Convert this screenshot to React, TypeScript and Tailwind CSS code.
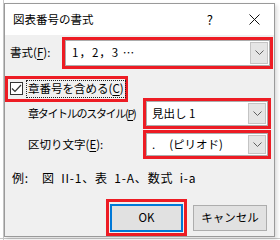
import React from "react";

const FONT = { fontFamily: '"Meiryo UI", "Noto Sans CJK JP", "Noto Sans", sans-serif' };

const Chevron = () => (
  <svg width="9" height="5" viewBox="0 0 9 5" fill="none">
    <path d="M0.5 0.5 L4.5 4.5 L8.5 0.5" stroke="#606060" strokeWidth="1" />
  </svg>
);

const Combo = ({ children }: { children: React.ReactNode }) => (
  <div className="border-[3px] border-[#ed1c24] h-full">
    <div className="flex h-full border border-[#acacac] bg-white p-[1px]">
      <div className="flex-1 flex items-center pl-[4px] text-[11.5px] leading-none whitespace-nowrap text-black">{children}</div>
      <div className="w-[18px] bg-[#e5e5e5] border border-[#c4c4c4] flex items-center justify-center">
        <Chevron />
      </div>
    </div>
  </div>
);

const U = ({ c }: { c: string }) => <span className="underline underline-offset-2">{c}</span>;

export default function App() {
  return (
    <div className="relative w-[280px] h-[240px] overflow-hidden bg-white" style={FONT}>
      {/* background sheet behind the dialog */}
      <div className="absolute left-[3px] top-0 w-px h-[240px] bg-[#c8c8c8]" />
      <div className="absolute left-0 top-[238px] w-[280px] h-px bg-[#c8c8c8]" />

      {/* dialog window */}
      <div className="absolute left-[4px] top-[3px] w-[271px] h-[234px] border border-[#9a9a9a] bg-[#f0f0f0] flex flex-col shadow-[2px_2px_4px_rgba(0,0,0,0.15)]">
        <div className="h-[31px] bg-white flex items-center pl-[8px] pr-[14px] text-[11.5px] leading-none whitespace-nowrap text-black shrink-0">
          <span className="flex-1">図表番号の書式</span>
          <span className="mr-[36px] text-[13px]">?</span>
          <svg width="11" height="11" viewBox="0 0 11 11">
            <path d="M0.5 0.5 L10.5 10.5 M10.5 0.5 L0.5 10.5" stroke="#111" strokeWidth="1" />
          </svg>
        </div>

        <div className="flex items-center mt-[2px] h-[32px] pr-[1px]">
          <div className="w-[57px] pl-[5px] text-[11.5px] leading-none whitespace-nowrap text-black">
            書式(<U c="F" />):
          </div>
          <div className="flex-1 h-full">
            <Combo>
              <span className="pl-[1px] tracking-[1px]">1，2，3 …</span>
            </Combo>
          </div>
        </div>

        <div className="mt-[7px] ml-0 w-[123px] h-[27px] border-[3px] border-[#ed1c24] flex items-center pl-[2px]">
          <div className="w-[13px] h-[13px] shrink-0 border border-[#333] bg-white flex items-center justify-center">
            <svg width="11" height="9" viewBox="0 0 11 9" fill="none">
              <path d="M1 4.5 L4 7.5 L10 1" stroke="#333" strokeWidth="1.2" />
            </svg>
          </div>
          <div className="ml-[3px] border border-dotted border-[#222] px-[1px] h-[18px] flex items-center text-[11.5px] leading-none whitespace-nowrap text-black">
            章番号を含める(<U c="C" />)
          </div>
        </div>

        <div className="flex items-center mt-[-4px] h-[31px] pr-[3px]">
          <div className="w-[138px] pl-[23px] text-[11px] tracking-[-1.3px] leading-none whitespace-nowrap text-black">
            章タイトルのスタイル(<U c="P" />)
          </div>
          <div className="flex-1 h-full">
            <Combo>見出し 1</Combo>
          </div>
        </div>

        <div className="flex items-center mt-[1px] h-[30px] pr-[3px]">
          <div className="w-[138px] pl-[23px] text-[11.5px] leading-none whitespace-nowrap text-black">
            区切り文字(<U c="E" />):
          </div>
          <div className="flex-1 h-full">
            <Combo>
              <span>.</span>
              <span className="ml-[14px]">(ピリオド)</span>
            </Combo>
          </div>
        </div>

        <div className="mt-[13px] pl-[7px] text-[12px] tracking-[0.8px] [word-spacing:3px] leading-none whitespace-nowrap text-black">
          例:&nbsp; 図 II-1、表 1-A、数式 i-a
        </div>

        <div className="flex items-center mt-[15px] pl-[101px]">
          <div className="border-[3px] border-[#ed1c24] p-px">
            <button className="w-[73px] h-[28px] border-2 border-[#0078d7] bg-[#e1e1e1] text-[11.5px] leading-none text-black">OK</button>
          </div>
          <button className="ml-[6px] w-[74px] h-[26px] border border-[#adadad] bg-[#e1e1e1] text-[11.5px] leading-none whitespace-nowrap text-black">
            キャンセル
          </button>
        </div>
      </div>
    </div>
  );
}
